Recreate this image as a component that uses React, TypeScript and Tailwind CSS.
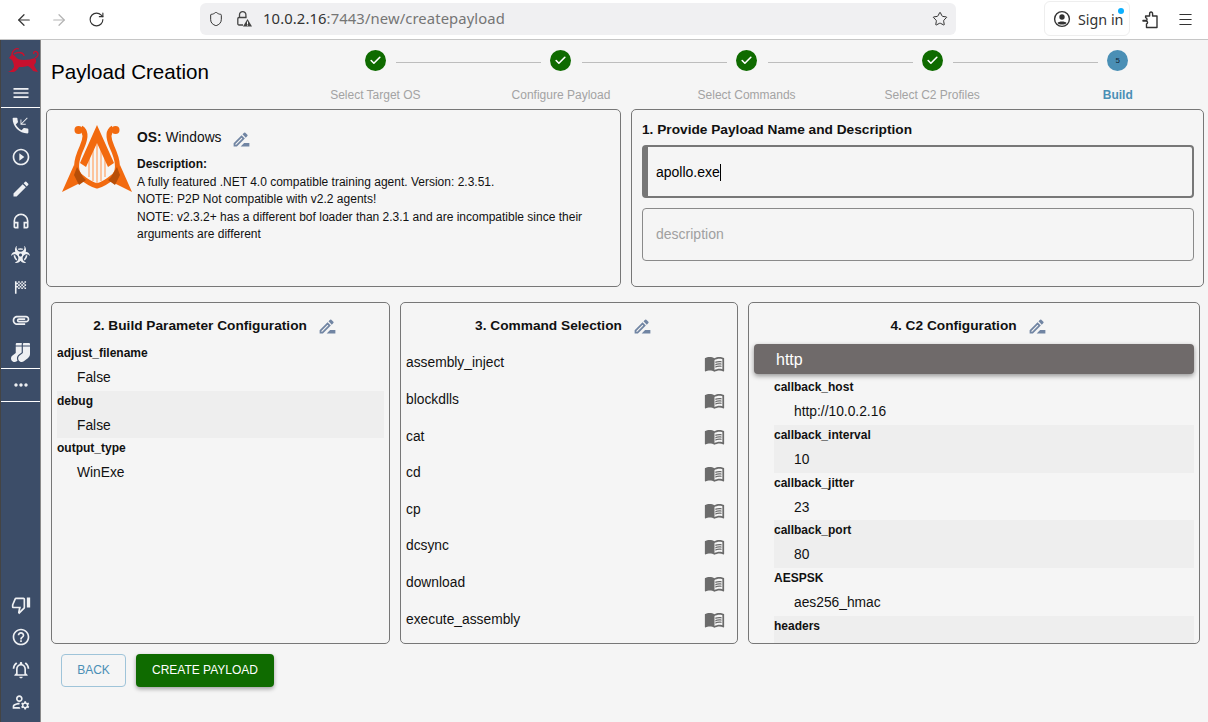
import React from 'react';
import { ArrowLeft, ArrowRight, RotateCw, Shield, Star, Menu, Check } from 'lucide-react';
import {
  MdPhoneCallback,
  MdPlayCircleOutline,
  MdEdit,
  MdOutlineHeadphones,
  MdSportsScore,
  MdAttachment,
  MdMoreHoriz,
  MdMenu,
  MdOutlineThumbDown,
  MdHelpOutline,
  MdOutlineNotificationsActive,
  MdOutlineManageAccounts,
  MdOutlineDriveFileRenameOutline,
  MdMenuBook,
} from 'react-icons/md';
import { FaBiohazard, FaSocks } from 'react-icons/fa';

const steps = ['Select Target OS', 'Configure Payload', 'Select Commands', 'Select C2 Profiles', 'Build'];

const buildParams = [
  { name: 'adjust_filename', value: 'False' },
  { name: 'debug', value: 'False' },
  { name: 'output_type', value: 'WinExe' },
];

const commands = ['assembly_inject', 'blockdlls', 'cat', 'cd', 'cp', 'dcsync', 'download', 'execute_assembly'];

const c2Params = [
  { name: 'callback_host', value: 'http://10.0.2.16' },
  { name: 'callback_interval', value: '10' },
  { name: 'callback_jitter', value: '23' },
  { name: 'callback_port', value: '80' },
  { name: 'AESPSK', value: 'aes256_hmac' },
  { name: 'headers', value: '' },
];

function BrowserBar() {
  return (
    <div className="h-10 flex items-center bg-white border-b border-[#c6c6c6] text-[#333] font-['Noto_Sans',sans-serif]">
      <ArrowLeft size={18} className="ml-[15px]" strokeWidth={1.6} />
      <ArrowRight size={18} className="ml-[17px] text-[#b3b3b3]" strokeWidth={1.6} />
      <RotateCw size={17} className="ml-[20px]" strokeWidth={1.6} />
      <div className="ml-[95px] w-[756px] h-8 mt-[-2px] bg-[#f0f0f2] rounded-md flex items-center">
        <Shield size={16} className="ml-[8px]" strokeWidth={1.5} />
        <svg width="16" height="17" viewBox="0 0 16 17" className="ml-[12px]" fill="none">
          <path d="M3.5 7.5V4.8a3.2 3.2 0 0 1 6.4 0v2.7" stroke="#444" strokeWidth="1.3" />
          <path d="M7 15H3a1.2 1.2 0 0 1-1.2-1.2V8.7A1.2 1.2 0 0 1 3 7.5h7.5" stroke="#444" strokeWidth="1.3" />
          <path d="M11.5 9 16 16.5H7z" fill="#444" />
          <rect x="11" y="11.5" width="1" height="2.6" fill="#fff" />
          <rect x="11" y="14.6" width="1" height="1" fill="#fff" />
        </svg>
        <span className="ml-[11px] text-[14.8px] tracking-[0.1px]">
          10.0.2.16<span className="text-[#757575]">:7443/new/createpayload</span>
        </span>
        <Star size={16} className="ml-auto mr-[8px]" strokeWidth={1.5} />
      </div>
      <div className="ml-[88px] relative w-[86px] h-[35px] mt-[-2px] border border-[#eee] rounded-md flex items-center">
        <svg width="18" height="18" viewBox="0 0 18 18" className="ml-[8px]" fill="none">
          <circle cx="9" cy="9" r="7.4" stroke="#333" strokeWidth="1.4" />
          <circle cx="9" cy="7" r="2.7" fill="#333" />
          <path d="M4.5 13c1-2 8-2 9 0-1.5 2-7.5 2-9 0z" fill="#333" />
        </svg>
        <span className="ml-[7px] mt-[2px] text-[14.3px]">Sign in</span>
        <div className="absolute left-[73px] top-[6px] w-[6px] h-[6px] rounded-full bg-[#0cb0ff]" />
      </div>
      <svg width="16" height="18" viewBox="0 0 16 18" fill="none" stroke="#333" strokeWidth="1.4" strokeLinejoin="round" className="ml-[12px]">
        <path d="M1 9.5h3c1.4 0 1.4-2.5-.4-3V5h4V3c0-2.6 3-2.6 3 0v2h4.4v11.5H4.5V13c1.5-.5 1.5-3-.5-3H1z" />
      </svg>
      <Menu size={17} className="ml-[19px]" strokeWidth={1.5} />
    </div>
  );
}

function LionLogo() {
  return (
    <svg width="32" height="28" viewBox="0 0 32 28" className="ml-[6px] mt-[7px]">
      <g fill="#c8102e">
        <path d="M2 11 L5 7 L8 9 C10 12 13 13 17 13 C21 13 25 12 28 11 C30 14 29 16 27 18 C28 21 30 23 31 25 L26 24 C25 22 23 20 21 19 C17 20 14 20 12 20 C11 22 9 24 7 25 L1 25 C4 24 6 22 7 20 C7 17 6 15 5 13 Z" />
      </g>
      <g fill="none" stroke="#c8102e" strokeWidth="1.3">
        <path d="M28 11 C31 10 32 7 30 5 C28 3.5 26 5 27 7" />
        <path d="M5 8 C5 3 9 1 12 2" />
        <path d="M7 7 C12 4 17 6 17 9" />
      </g>
    </svg>
  );
}

function NavIcon({ children, className }: { children: React.ReactNode; className: string }) {
  return <div className={`flex justify-center text-[#eef0f3] ${className}`}>{children}</div>;
}

function Sidebar() {
  return (
    <div className="w-[41px] h-[682px] shrink-0 bg-[#3c4d68] border-l border-[#444] border-r border-r-[#8a8a8a] flex flex-col">
      <LionLogo />
      <NavIcon className="mt-[9px] h-[24px] border-b border-white">
        <MdMenu size={20} className="mt-[-1px]" />
      </NavIcon>
      <NavIcon className="mt-[7px]"><MdPhoneCallback size={21} /></NavIcon>
      <NavIcon className="mt-[11px]"><MdPlayCircleOutline size={20} /></NavIcon>
      <NavIcon className="mt-[12px]"><MdEdit size={20} /></NavIcon>
      <NavIcon className="mt-[12px]"><MdOutlineHeadphones size={20} /></NavIcon>
      <NavIcon className="mt-[14px]"><FaBiohazard size={19} /></NavIcon>
      <NavIcon className="mt-[14px]"><MdSportsScore size={19} /></NavIcon>
      <NavIcon className="mt-[13px]"><MdAttachment size={20} /></NavIcon>
      <NavIcon className="mt-[13px]"><FaSocks size={19} /></NavIcon>
      <NavIcon className="mt-[6px] h-[34px] border-y border-white items-center"><MdMoreHoriz size={20} /></NavIcon>
      <div className="mt-auto flex flex-col pb-[10px]">
        <NavIcon className=""><MdOutlineThumbDown size={20} /></NavIcon>
        <NavIcon className="mt-[12px]"><MdHelpOutline size={20} /></NavIcon>
        <NavIcon className="mt-[13px]"><MdOutlineNotificationsActive size={20} /></NavIcon>
        <NavIcon className="mt-[12px]"><MdOutlineManageAccounts size={20} /></NavIcon>
      </div>
    </div>
  );
}

function Stepper() {
  return (
    <div className="ml-[73.6px] w-[928px] shrink-0 grid grid-cols-5 pt-[10px]">
      {steps.map((step, i) => (
        <div key={step} className="relative flex flex-col items-center">
          {i < 4 ? (
            <div className="w-[21px] h-[21px] rounded-full bg-[#0f6b00] flex items-center justify-center">
              <Check size={13} strokeWidth={3} className="text-white" />
            </div>
          ) : (
            <div className="w-[21px] h-[21px] rounded-full bg-[#4a8fb5] flex items-center justify-center text-[8px] text-[#123]">
              5
            </div>
          )}
          {i < 4 && <div className="absolute left-[calc(50%+21px)] top-[12px] w-[145px] h-px bg-[#bdbdbd]" />}
          <div className={`mt-[15px] text-[12px] ${i === 4 ? 'font-bold text-[#4a8fb5]' : 'text-[#a3a3a3]'}`}>{step}</div>
        </div>
      ))}
    </div>
  );
}

function EditIcon() {
  return <MdOutlineDriveFileRenameOutline size={21} className="text-[#7185a3]" />;
}

function Card({ className, children }: { className: string; children: React.ReactNode }) {
  return <div className={`border border-[#777] rounded-[5px] bg-[#f5f5f5] ${className}`}>{children}</div>;
}

function HarpLogo() {
  return (
    <svg width="70" height="68" viewBox="0 0 70 68" className="shrink-0 mt-[3px]">
      <g stroke="#ffb07a" strokeWidth="1.4">
        <path d="M27 28V52M31 20V56M35 16V58M39 20V56M43 28V52" />
      </g>
      <path fill="#f26a0f" d="M35 0 52 38 46 42 35 18 24 42 18 38Z" />
      <path fill="#f26a0f" d="M12 40 0 67 22 56ZM58 40 70 67 48 56Z" />
      <path fill="none" stroke="#f26a0f" strokeWidth="5" d="M19 3C24 6 24 13 20 22C14 35 12 45 18 51C24 56 31 60 35 61C39 60 46 56 52 51C58 45 56 35 50 22C46 13 46 6 51 3" />
      <circle cx="16.5" cy="5" r="4" fill="#f26a0f" />
      <circle cx="53.5" cy="5" r="4" fill="#f26a0f" />
      <path fill="#b74e08" d="M15 42 21 52 24 55 17 60 12 50ZM55 42 49 52 46 55 53 60 58 50Z" />
    </svg>
  );
}

function ParamRow({ name, value, shaded }: { name: string; value: string; shaded: boolean }) {
  return (
    <div className={`h-[47.7px] ${shaded ? 'bg-[#eeeeee]' : ''}`}>
      <div className="h-[21px] text-[12px] font-bold leading-[20px]">{name}</div>
      <div className="text-[13.8px] leading-[27px] pl-[20px]">{value}</div>
    </div>
  );
}

function CardTitle({ title }: { title: string }) {
  return (
    <div className="flex justify-center items-center gap-[10px] h-[44px] mt-[1px] pr-[10px] text-[13.7px] font-bold">
      {title} <EditIcon />
    </div>
  );
}

export default function App() {
  return (
    <div className="w-[1208px] h-[722px] overflow-hidden bg-[#f5f5f5] font-['Liberation_Sans',sans-serif] text-[#111]">
      <BrowserBar />
      <div className="flex">
        <Sidebar />
        <div className="flex-1 min-w-0 relative">
          <div className="flex h-[69px]">
            <h1 className="ml-[10px] mt-[19px] text-[20.6px] leading-[25px] whitespace-nowrap w-[158px] text-black">Payload Creation</h1>
            <Stepper />
          </div>

          <div className="flex gap-[10px] ml-[5px] mr-[4px] h-[178px]">
            <Card className="w-[575px] flex pl-[15px] pt-[12px]">
              <HarpLogo />
              <div className="ml-[5px] pt-[6px] text-[12px] leading-[17.5px]">
                <div className="flex items-center h-[20px] text-[13.8px]">
                  <span className="font-bold">OS:</span>
                  <span className="ml-[4px]">Windows</span>
                  <span className="ml-[9px] mt-[3px]"><EditIcon /></span>
                </div>
                <div className="mt-[8.4px] font-bold">Description:</div>
                <div>A fully featured .NET 4.0 compatible training agent. Version: 2.3.51.</div>
                <div>NOTE: P2P Not compatible with v2.2 agents!</div>
                <div className="w-[460px] leading-[17.5px]">NOTE: v2.3.2+ has a different bof loader than 2.3.1 and are incompatible since their arguments are different</div>
              </div>
            </Card>
            <Card className="flex-1 pl-[10px] pr-[9px] pt-[12px]">
              <div className="text-[13.7px] font-bold leading-[16px]">1. Provide Payload Name and Description</div>
              <div className="mt-[7px] h-[53px] border-2 border-l-[6px] border-[#777] rounded-[4px] flex">
                <div className="ml-[8px] mt-[2px] self-center text-[14px] text-black flex items-center">
                  apollo.exe<span className="w-px h-[17px] bg-black" />
                </div>
              </div>
              <div className="mt-[10px] h-[53px] border border-[#8a8a8a] rounded-[4px] flex items-center pl-[13px] text-[14px] text-[#a0a0a0]">
                description
              </div>
            </Card>
          </div>

          <div className="flex gap-[10px] ml-[10px] mr-[8px] mt-[15px] h-[342px]">
            <Card className="w-[339px] px-[5px] overflow-hidden">
              <CardTitle title="2. Build Parameter Configuration" />
              <div className="mt-[-5px]">
                {buildParams.map((p, i) => (
                  <ParamRow key={p.name} name={p.name} value={p.value} shaded={i % 2 === 1} />
                ))}
              </div>
            </Card>
            <Card className="w-[338px] px-[5px] overflow-hidden">
              <CardTitle title="3. Command Selection" />
              <div className="mt-[-2.6px]">
                {commands.map((c) => (
                  <div key={c} className="h-[36.6px] flex items-center justify-between pr-[7px] text-[13.8px]">
                    {c}
                    <MdMenuBook size={21} className="text-[#6b6b6b]" />
                  </div>
                ))}
              </div>
            </Card>
            <Card className="flex-1 overflow-hidden px-[5px]">
              <CardTitle title="4. C2 Configuration" />
              <div className="h-[30px] mt-[-4px] pt-[2px] bg-[#6f6a6a] rounded-[4px] shadow-[0_2px_5px_rgba(0,0,0,0.4)] flex items-center pl-[22px] text-[16px] text-white">
                http
              </div>
              <div className="ml-[20px] mt-[3.3px]">
                {c2Params.map((p, i) => (
                  <ParamRow key={p.name} name={p.name} value={p.value} shaded={i % 2 === 1} />
                ))}
              </div>
            </Card>
          </div>

          <div className="flex gap-[10px] ml-[20px] mt-[10px]">
            <button className="w-[65px] h-[33px] pb-px border border-[#9fc4d9] rounded-[4px] text-[12px] text-[#4a8fb5]">BACK</button>
            <button className="w-[138px] h-[33px] pb-px rounded-[4px] bg-[#0f6b00] text-[12px] text-white shadow-[0_2px_4px_rgba(0,0,0,0.35)]">CREATE PAYLOAD</button>
          </div>
        </div>
      </div>
    </div>
  );
}
